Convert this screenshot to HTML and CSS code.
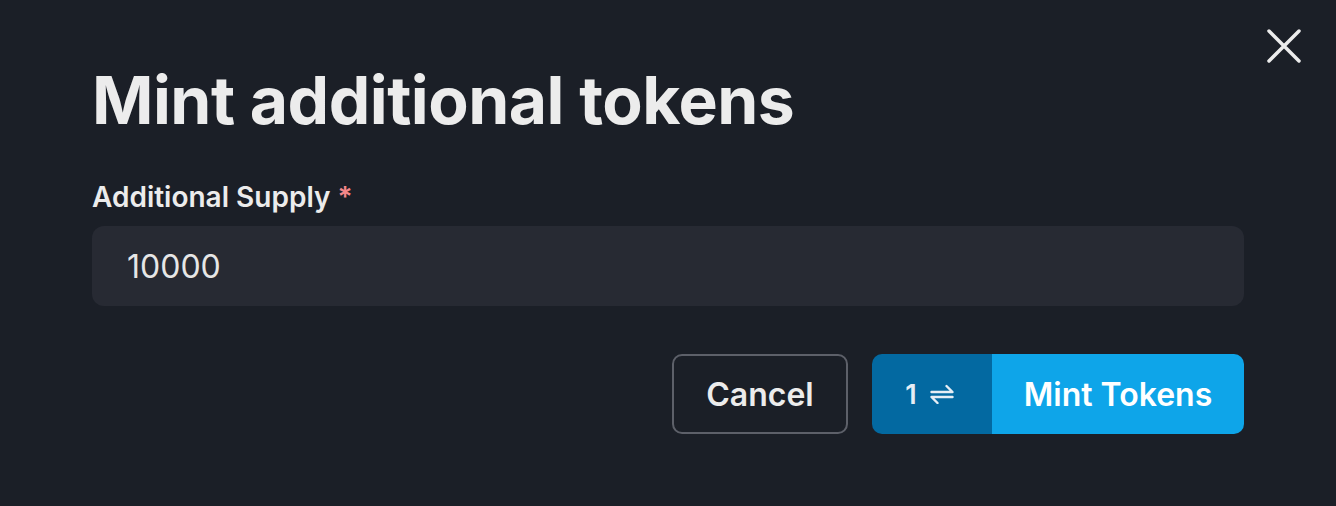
FILE: index.html
```html
<!DOCTYPE html>
<html>
<head>
<meta charset="utf-8">
<link rel="stylesheet" href="styles.css">
</head>
<body>
<div class="modal">
  <button class="close" aria-label="Close">
    <svg width="34" height="34" viewBox="0 0 34 34"><path d="M2 2 L32 32 M32 2 L2 32" stroke="#ececec" stroke-width="3.5" stroke-linecap="round" fill="none"/></svg>
  </button>
  <h1 class="title">Mint additional tokens</h1>
  <div class="field">
    <label class="label">Additional Supply <span class="req">*</span></label>
    <div class="input">10000</div>
  </div>
  <div class="actions">
    <button class="btn cancel">Cancel</button>
    <div class="btn mint">
      <span class="count">1
        <svg width="24" height="20" viewBox="0 0 24 20"><path d="M1.5 8 H22.5 L16.5 2 M22.5 13 H1.5 L7.5 19" stroke="#e6eef5" stroke-width="2.4" stroke-linecap="round" stroke-linejoin="round" fill="none"/></svg>
      </span>
      <span class="mint-label">Mint Tokens</span>
    </div>
  </div>
</div>
</body>
</html>
```
FILE: styles.css
```css
html, body {
  margin: 0;
  padding: 0;
  background: #1b1f27;
  height: 100%;
}
body {
  font-family: Inter, "Noto Sans", sans-serif;
  color: #ececec;
}
.modal {
  position: relative;
  width: 1336px;
  height: 506px;
  box-sizing: border-box;
  padding: 60px 92px 0 92px;
}
.close {
  position: absolute;
  top: 29px;
  right: 35px;
  background: none;
  border: none;
  padding: 0;
  width: 34px;
  height: 34px;
}
.title {
  margin: 0;
  font-size: 66px;
  font-weight: 700;
  line-height: 80px;
  letter-spacing: -0.5px;
  color: #ececec;
}
.field {
  margin-top: 39px;
}
.label {
  display: block;
  font-size: 28px;
  font-weight: 600;
  line-height: 36px;
  color: #ececec;
}
.req {
  color: #f4878a;
}
.input {
  margin-top: 11px;
  height: 80px;
  box-sizing: border-box;
  background: #272a33;
  border-radius: 12px;
  padding: 0 35px;
  display: flex;
  align-items: center;
  font-size: 32px;
  color: #e6e6e6;
}
.actions {
  margin-top: 48px;
  display: flex;
  justify-content: flex-end;
  gap: 24px;
}
.btn {
  height: 80px;
  box-sizing: border-box;
  border-radius: 10px;
  font-family: Inter, "Noto Sans", sans-serif;
  font-size: 32px;
  font-weight: 600;
  display: flex;
  align-items: center;
}
.cancel {
  width: 176px;
  justify-content: center;
  background: transparent;
  border: 2px solid #5d6069;
  color: #ececec;
}
.mint {
  width: 372px;
  overflow: hidden;
  color: #ffffff;
}
.count {
  width: 120px;
  height: 100%;
  box-sizing: border-box;
  padding-right: 5px;
  background: #0369a1;
  display: flex;
  align-items: center;
  justify-content: center;
  gap: 13px;
  font-size: 27px;
  color: #e6eef5;
}
.mint-label {
  flex: 1;
  height: 100%;
  background: #0ea5e9;
  display: flex;
  align-items: center;
  justify-content: center;
}
```
